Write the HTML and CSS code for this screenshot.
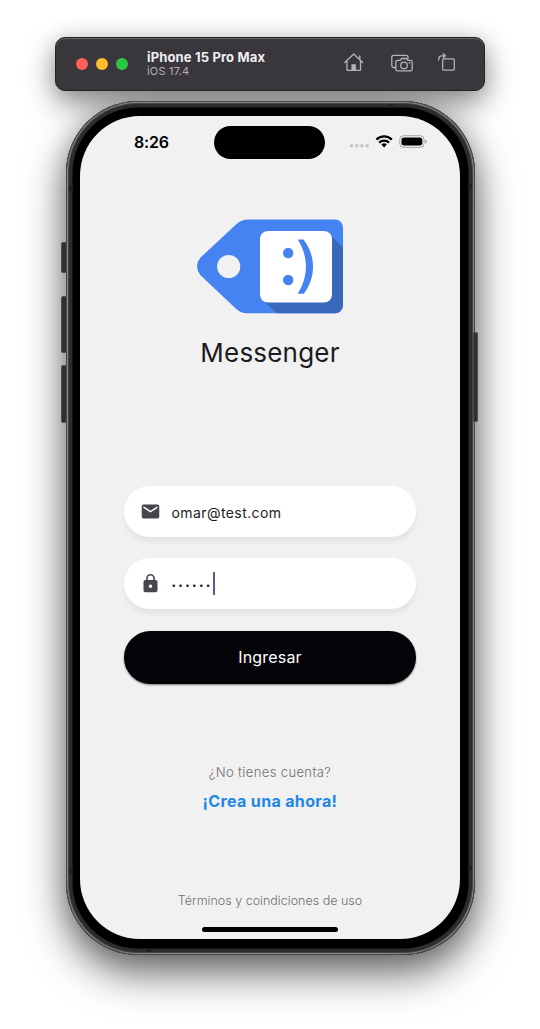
FILE: index.html
```html
<!DOCTYPE html>
<html lang="es">
<head>
<meta charset="utf-8">
<title>Messenger</title>
<link rel="stylesheet" href="styles.css">
</head>
<body>
<header class="toolbar">
  <div class="lights"><i class="red"></i><i class="yellow"></i><i class="green"></i></div>
  <div class="device"><strong>iPhone 15 Pro Max</strong><span>iOS 17.4</span></div>
  <svg class="tools" width="116" height="24" viewBox="0 0 116 24" fill="none" stroke="#b6b3b8" stroke-width="1.3" stroke-linejoin="round" stroke-linecap="round">
    <path d="M1.7 11.5 10.7 3l9 8.500M4 10v9.300h13.500V10M16.800 8V5"/>
    <path d="M8.700 19v-5.500h4V19z" fill="#b6b3b8" stroke="#b6b3b8" stroke-width=".5"/>
    <path d="M52.500 16.500h-2a1.700 1.700 0 0 1-1.700-1.700V6a1.700 1.700 0 0 1 1.700-1.700h12.800A1.700 1.700 0 0 1 65 6v1.500"/>
    <path d="M54.500 9.300h2.800l1.200-1.800h5.200l1.200 1.800h2.600a1.700 1.700 0 0 1 1.700 1.700v7.200a1.700 1.700 0 0 1-1.700 1.700h-13a1.700 1.700 0 0 1-1.700-1.700V11a1.700 1.700 0 0 1 1.700-1.700z"/>
    <circle cx="61" cy="14.400" r="3.300"/><circle cx="66.500" cy="11.800" r=".3"/>
    <rect x="99.700" y="7.800" width="11.600" height="11.400" rx="1.200"/>
    <path d="M95.800 9V7.800a3 3 0 0 1 3-3h2.500M100.200 2.700l2.300 2.100-2.300 2.100"/>
  </svg>
</header>
<div class="phone">
  <b class="key action"></b><b class="key up"></b><b class="key down"></b><b class="key side"></b>
  <i class="seam s1"></i><i class="seam s2"></i><i class="seam s3"></i><i class="seam s4"></i><i class="seam s5"></i><i class="seam s6"></i>
  <main class="screen">
    <div class="status">
      <time>8:26</time>
      <div class="island"></div>
      <svg class="signals" width="80" height="18" viewBox="0 0 80 18">
        <g fill="#c5c5c7"><circle cx="2.500" cy="12.800" r="1.800"/><circle cx="7.800" cy="12.800" r="1.800"/><circle cx="13" cy="12.800" r="1.800"/><circle cx="18.200" cy="12.800" r="1.800"/></g>
        <g fill="none" stroke="#000" stroke-width="2.300"><path d="M27.400 6.600a10.600 10.600 0 0 1 15.400 0"/><path d="M30.200 9.600a6.900 6.900 0 0 1 9.800 0"/></g>
        <path d="M32.400 11.600a4 4 0 0 1 5.400 0l-2.700 2.800z"/>
        <rect x="50.800" y="2.700" width="24.200" height="11.600" rx="3.700" fill="none" stroke="#a4a4a6"/>
        <rect x="52.500" y="4.400" width="20.800" height="8.200" rx="2.400"/><path d="M76.100 6.400q1.600.6 1.600 2.100t-1.600 2.100z" fill="#a4a4a6"/>
      </svg>
    </div>
    <svg class="logo" width="148" height="96" viewBox="0 0 148 96">
      <path d="M52 1.500h87a8 8 0 0 1 8 8v77.800a8 8 0 0 1-8 8H51q-6 0-11-4.600L4.500 57.200Q1 53 1 48.400T4.500 39.600L40 6.500Q45.500 1.500 52 1.500z" fill="#4583f0"/>
      <path d="m133 16 14 13.500v57.800a8 8 0 0 1-8 8H80.500L67 82z" fill="#3968ba"/>
      <circle cx="32.700" cy="48.500" r="11.600" fill="#f1f1f1"/>
      <rect x="64" y="13" width="72" height="71.500" rx="8" fill="#fff"/>
      <circle cx="92.200" cy="35" r="5.200" fill="#4583f0"/><circle cx="92.200" cy="62" r="5.200" fill="#4583f0"/>
      <path d="M101.700 21.600h5.800c6 7.600 9.500 17 9.500 27.200s-3.500 19.700-9.300 27h-6c5-8 8.200-17.200 8.200-27s-3-19.200-8.200-27.200z" fill="#4583f0"/>
    </svg>
    <h1>Messenger</h1>
    <form>
      <div class="field">
        <svg width="24" height="24" viewBox="0 0 24 24"><path fill="#49454f" d="M20 4H4a2 2 0 0 0-2 2v12c0 1.100.9 2 2 2h16a2 2 0 0 0 2-2V6a2 2 0 0 0-2-2zm0 4-8 5-8-5V6l8 5 8-5z"/></svg>
        <span>omar@test.com</span>
      </div>
      <div class="field">
        <svg width="24" height="24" viewBox="0 0 24 24"><path fill="#49454f" d="M18 8h-1V6A5 5 0 0 0 7 6v2H6a2 2 0 0 0-2 2v10c0 1.100.9 2 2 2h12a2 2 0 0 0 2-2V10a2 2 0 0 0-2-2zm-6 9a2 2 0 1 1 0-4 2 2 0 0 1 0 4zM8.900 8V6a3.100 3.100 0 0 1 6.200 0v2z"/></svg>
        <span class="password">••••••</span><i class="caret"></i>
      </div>
      <button type="button">Ingresar</button>
    </form>
    <p class="ask">¿No tienes cuenta?</p>
    <a class="create">¡Crea una ahora!</a>
    <p class="terms">Términos y coindiciones de uso</p>
    <div class="home"></div>
  </main>
</div>
</body>
</html>
```
FILE: styles.css
```css
* { box-sizing: border-box; }
body {
  margin: 0;
  padding-top: 37px;
  height: 1029px;
  overflow: hidden;
  background: #fff;
  font-family: Inter, sans-serif;
  display: flex;
  flex-direction: column;
  align-items: center;
}
.toolbar {
  width: 430px;
  height: 54px;
  flex: none;
  padding: 0 28px 0 21px;
  display: flex;
  align-items: center;
  background: #3a373c;
  border: 1px solid #242226;
  border-radius: 10px;
  box-shadow: inset 0 1px #68656a, 0 12px 30px rgba(0, 0, 0, .45), 0 0 20px rgba(0, 0, 0, .1);
}
.lights { display: flex; gap: 8px; margin-left: -1px; }
.lights i { width: 12px; height: 12px; border-radius: 50%; }
.red { background: #ff5f57; }
.yellow { background: #febc2e; }
.green { background: #28c840; }
.device { margin-left: 19px; display: flex; flex-direction: column; color: #f0eff1; }
.device strong { font-size: 13px; line-height: 14px; font-weight: 700; letter-spacing: .15px; }
.device span { font-size: 11px; line-height: 15px; color: #b4b1b6; letter-spacing: .2px; }
.tools { margin: 0 -3px 2px auto; }
.phone {
  position: relative;
  z-index: 0;
  flex: none;
  width: 409px;
  height: 854px;
  margin: 10px 0 0 1px;
  padding: 15px 14px;
  border-radius: 72px;
  background: #000;
  box-shadow: inset 0 0 0 1px #474747, inset 0 0 0 2px #858585, inset 0 0 0 3px #444, inset 0 0 0 6.500px #2c2c2c;
}
.phone::before {
  content: "";
  position: absolute;
  inset: 0;
  z-index: -1;
  border-radius: 72px;
  box-shadow: 0 18px 42px rgba(0, 0, 0, .6), 0 0 24px rgba(0, 0, 0, .16);
  clip-path: inset(-10px -80px -100px -80px);
}
.key { position: absolute; width: 6px; left: -5px; background: #303030; border: 1px solid #505050; border-radius: 2px 0 0 2px; }
.action { top: 141px; height: 31px; }
.up { top: 195px; height: 57px; }
.down { top: 264px; height: 58px; }
.side { left: 407px; width: 5px; top: 231px; height: 90px; border-radius: 0 2px 2px 0; }
.seam { position: absolute; background: #1f1f1f; width: 4px; height: 5px; }
.s1 { left: 3px; top: 85px; }
.s2 { right: 3px; top: 83px; }
.s3 { left: 3px; top: 768px; }
.s4 { right: 3px; top: 765px; }
.s5 { left: 323px; top: 3px; height: 4px; }
.s6 { left: 81px; bottom: 3px; height: 4px; }
.screen {
  width: 380px;
  height: 823px;
  overflow: hidden;
  border-radius: 60px;
  background: #f1f1f1;
  color: #1d1b20;
  display: flex;
  flex-direction: column;
  align-items: center;
}
.status {
  width: 100%;
  height: 102px;
  padding: 10px 32px 0 54px;
  display: grid;
  grid-template-columns: 80px 112px 1fr;
  align-items: start;
}
.status time { font-size: 16px; line-height: 32px; font-weight: 600; letter-spacing: -.2px; color: #000; }
.island { width: 111px; height: 32.500px; border-radius: 17px; background: #000; margin-left: .4px; }
.signals { justify-self: end; margin-top: 7px; margin-right: -1px; }
.logo { flex: none; }
h1 { margin: 22px 0 0; font-size: 26px; line-height: 34px; font-weight: 400; letter-spacing: .2px; }
form { width: 292px; margin-top: 116px; display: flex; flex-direction: column; }
.field {
  height: 51px;
  margin-bottom: 21.300px;
  padding-left: 15.500px;
  display: flex;
  align-items: center;
  background: #fff;
  border-radius: 26px;
  box-shadow: 0 5px 5px rgba(0, 0, 0, .05);
}
.field svg { width: 21px; height: 21px; margin-right: 11px; }
.field span { padding-top: 1px; font-size: 14px; letter-spacing: .42px; }
.field .password { font-size: 8px; letter-spacing: 2.350px; padding-top: 3px; }
.caret { width: 2px; height: 23px; background: #6750a4; }
button {
  height: 53px;
  border: 0;
  border-radius: 27px;
  background: #040308;
  color: #fff;
  font: 400 16px Inter, sans-serif;
  letter-spacing: .2px;
  box-shadow: 0 1px 2px rgba(0, 0, 0, .5);
}
p { margin: 0; }
.ask { margin-top: 78px; font-size: 13px; line-height: 20px; font-weight: 300; letter-spacing: .38px; color: #707070; }
.create { margin-top: 8px; font-size: 16px; line-height: 22px; font-weight: 700; letter-spacing: .35px; color: #1e88e5; }
.terms { margin-top: 79px; font-size: 12.500px; line-height: 20px; font-weight: 300; color: #707070; }
.home { width: 136px; height: 4.500px; margin-top: 16.500px; flex: none; border-radius: 3px; background: #000; }
```
